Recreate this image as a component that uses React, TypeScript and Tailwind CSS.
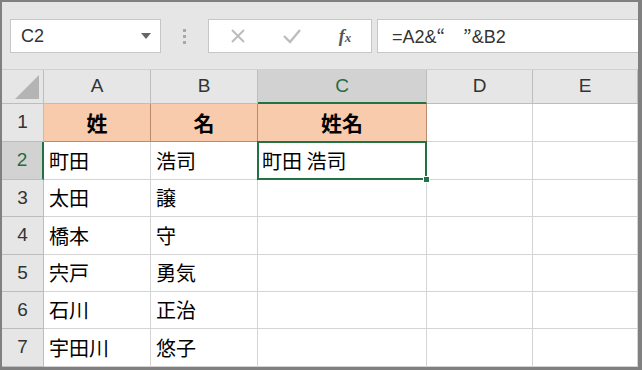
import React from "react";

const cols = ["A", "B", "C", "D", "E"];
const rows: string[][] = [
  ["姓", "名", "姓名"],
  ["町田", "浩司", "町田 浩司"],
  ["太田", "譲", ""],
  ["橋本", "守", ""],
  ["宍戸", "勇気", ""],
  ["石川", "正治", ""],
  ["宇田川", "悠子", ""],
];
const rowH = ["h-[38px]", "h-[38px]", "h-[37px]", "h-[38px]", "h-[37px]", "h-[37px]", "h-[38px]"];

const jp = { fontFamily: '"Noto Sans CJK JP", "Noto Sans", sans-serif' };
const lat = { fontFamily: '"Liberation Sans", Arial, sans-serif' };

const App = () => {
  return (
    <div className="w-[642px] h-[370px] overflow-hidden bg-[#808080] pt-[2px] pl-[2px] pr-[4px] pb-[3px]">
      <div className="w-full h-full bg-white flex flex-col">
        {/* formula bar */}
        <div className="h-[68px] bg-[#e6e6e6] border-b border-[#d0d0d0] flex items-start pt-[17px] pl-[8px]">
          <div className="w-[151px] h-[34px] bg-white border border-[#c6c6c6] flex items-center justify-between pl-[10px] pr-[9px]">
            <span className="text-[18px] text-[#333]" style={lat}>C2</span>
            <svg width="10" height="6" viewBox="0 0 10 6">
              <path d="M0 0 L10 0 L5 6 Z" fill="#666" />
            </svg>
          </div>
          <div className="w-[47px] h-[34px] flex flex-col items-center justify-center gap-[3px]">
            <div className="w-[3px] h-[3px] bg-[#a8a8a8]" />
            <div className="w-[3px] h-[3px] bg-[#a8a8a8]" />
            <div className="w-[3px] h-[3px] bg-[#a8a8a8]" />
          </div>
          <div className="w-[164px] h-[34px] bg-white border border-[#c6c6c6] flex items-center">
            <div className="w-[56px] flex justify-center pl-[2px]">
              <svg width="16" height="16" viewBox="0 0 16 16">
                <path d="M2 2 L14 14 M14 2 L2 14" stroke="#bdbdbd" strokeWidth="2" />
              </svg>
            </div>
            <div className="w-[54px] flex justify-center">
              <svg width="20" height="16" viewBox="0 0 20 16">
                <path d="M2 8 L8 14 L18 2" stroke="#bdbdbd" strokeWidth="2.4" fill="none" />
              </svg>
            </div>
            <div className="w-[52px] flex justify-center">
              <span className="text-[18px] italic font-bold text-[#555]" style={{ fontFamily: '"Liberation Serif", serif' }}>
                f<span className="text-[13px]">x</span>
              </span>
            </div>
          </div>
          <div className="flex-1 ml-[5px] h-[34px] bg-white border border-[#c6c6c6] border-r-0 flex items-center pl-[14px]">
            <span className="text-[18px] text-[#333]" style={lat}>
              =A2&<span style={jp}>“　”</span>&B2
            </span>
          </div>
        </div>

        {/* grid */}
        <div className="grid grid-cols-[42px_107px_107px_169px_106px_1fr]">
          {/* column headers */}
          <div className="h-[34px] bg-[#e6e6e6] border-r border-b border-[#bdbdbd] relative">
            <svg className="absolute right-[4px] bottom-[4px]" width="24" height="24" viewBox="0 0 24 24">
              <path d="M24 0 L24 24 L0 24 Z" fill="#b4b4b4" />
            </svg>
          </div>
          {cols.map((c) => (
            <div
              key={c}
              className={
                c === "C"
                  ? "h-[34px] bg-[#d2d2d2] border-r border-[#bdbdbd] border-b-2 border-b-[#217346] flex items-center justify-center text-[19px] text-[#276b45]"
                  : "h-[34px] bg-[#e6e6e6] border-r border-b border-[#bdbdbd] flex items-center justify-center text-[19px] text-[#333]"
              }
              style={lat}
            >
              {c}
            </div>
          ))}

          {rows.map((r, i) => (
            <React.Fragment key={i}>
              <div
                className={
                  i === 1
                    ? `${rowH[i]} bg-[#d2d2d2] border-b border-[#bdbdbd] border-r-2 border-r-[#217346] flex items-center justify-center text-[19px] text-[#276b45]`
                    : `${rowH[i]} bg-[#e6e6e6] border-r border-b border-[#bdbdbd] flex items-center justify-center text-[19px] text-[#333]`
                }
                style={lat}
              >
                {i + 1}
              </div>
              {[0, 1, 2, 3, 4].map((j) => {
                const v = r[j] ?? "";
                if (i === 0 && j < 3) {
                  return (
                    <div
                      key={j}
                      className={`${rowH[i]} bg-[#f8cbad] border-r border-b border-[#b98a6a] flex items-center justify-center font-bold text-[21px] text-black`}
                      style={jp}
                    >
                      {v}
                    </div>
                  );
                }
                if (i === 1 && j === 2) {
                  return (
                    <div key={j} className={`${rowH[i]} relative border-r border-b border-[#d4d4d4]`}>
                      <div className="absolute -left-[1px] -top-[1px] right-[-1px] bottom-[-1px] border-2 border-[#217346] flex items-center pl-[3px] text-[20px] text-black" style={jp}>
                        {v}
                      </div>
                      <div className="absolute right-[-4px] bottom-[-4px] w-[7px] h-[7px] bg-[#217346] border border-white" />
                    </div>
                  );
                }
                return (
                  <div
                    key={j}
                    className={`${rowH[i]} border-r border-b border-[#d4d4d4] flex items-center pl-[5px] text-[20px] text-black`}
                    style={jp}
                  >
                    {v}
                  </div>
                );
              })}
            </React.Fragment>
          ))}
        </div>
      </div>
    </div>
  );
};

export default App;
